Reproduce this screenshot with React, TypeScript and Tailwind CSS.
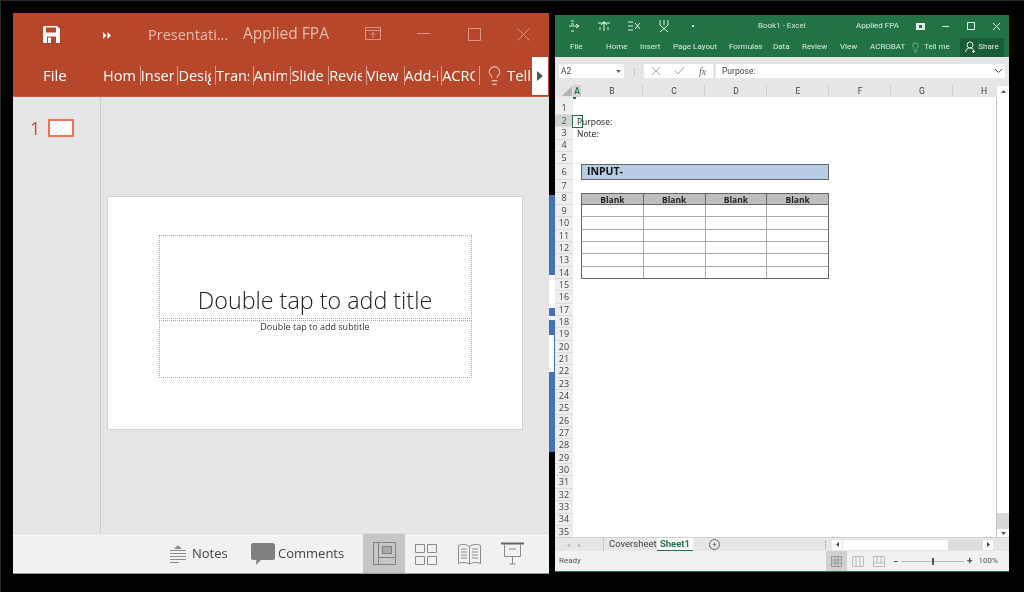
import { Lightbulb } from 'lucide-react';

const ui = { fontFamily: '"Open Sans", "Noto Sans", sans-serif' };
const xl = { fontFamily: 'Roboto, "Open Sans", sans-serif' };

const pptTabs = ['Home', 'Insert', 'Design', 'Transitions', 'Animations', 'Slide Show', 'Review', 'View', 'Add-ins', 'ACROBAT'];
const excelTabs = [
  { label: 'File', w: 'w-[36px]' },
  { label: 'Home', w: 'w-[34px]' },
  { label: 'Insert', w: 'w-[33px]' },
  { label: 'Page Layout', w: 'w-[56px]' },
  { label: 'Formulas', w: 'w-[44px]' },
  { label: 'Data', w: 'w-[29px]' },
  { label: 'Review', w: 'w-[38px]' },
  { label: 'View', w: 'w-[30px]' },
  { label: 'ACROBAT', w: 'w-[41px]' },
];
const columns = ['B', 'C', 'D', 'E', 'F', 'G', 'H'];
const rows = Array.from({ length: 35 }, (_, i) => i + 1);

const SaveIcon = () => (
  <svg width="17" height="17" viewBox="0 0 17 17">
    <path d="M0 1.5C0 .7.7 0 1.5 0H14l3 3v12.5c0 .8-.7 1.5-1.5 1.5h-14C.7 17 0 16.300 0 15.500z" fill="#fff" />
    <rect x="3" y="1.500" width="10" height="5" fill="#b7472a" />
    <rect x="4" y="10.500" width="9" height="6.500" fill="#b7472a" />
    <rect x="5" y="11.500" width="3" height="5.500" fill="#fff" />
  </svg>
);

const WindowControls = () => (
  <div className="flex items-center text-[#dc9682]">
    <svg width="16" height="14" viewBox="0 0 16 14" fill="none" stroke="currentColor" className="mr-[36px]">
      <path d="M.5.5h15v12H.5zM.5 3.500h15M8 11V5.500M5.500 8 8 5.500 10.500 8" />
    </svg>
    <svg width="13" height="2" viewBox="0 0 13 2" className="mr-[38px]">
      <rect width="13" height="1" fill="currentColor" />
    </svg>
    <svg width="13" height="13" viewBox="0 0 13 13" fill="none" stroke="currentColor" className="mr-[36px]">
      <path d="M.5.5h12v12H.5z" />
    </svg>
    <svg width="13" height="13" viewBox="0 0 13 13" fill="none" stroke="currentColor">
      <path d="m.5.5 12 12M12.500.5l-12 12" />
    </svg>
  </div>
);

const PptStatusBar = () => (
  <div className="flex h-[41px] items-center border-y border-t-[#dcdcdc] border-b-[#9a9a9a] bg-[#f1f1f1] text-[13px] text-[#444]">
    <svg width="18" height="20" viewBox="0 0 18 20" className="ml-[156px] text-[#8a8a8a]" fill="currentColor">
      <path d="M9 1 13 5H5zM1 6h16v1H1zM1 9h16v1H1zM1 12h16v1H1zM1 15h16v1H1zM1 18h9v1H1z" />
    </svg>
    <span className="ml-[5px] w-[59px]">Notes</span>
    <svg width="24" height="22" viewBox="0 0 24 22" className="text-[#808080]" fill="currentColor">
      <path d="M2 0h20c1 0 2 1 2 2v13c0 1-1 2-2 2H10l-5 5 .5-5H2c-1 0-2-1-2-2V2C0 1 1 0 2 0z" />
    </svg>
    <span className="ml-[3px] w-[85px]">Comments</span>
    <div className="flex h-full w-[42px] items-center justify-center bg-[#c6c6c6]">
      <svg width="23" height="23" viewBox="0 0 23 23" fill="none" stroke="#808080">
        <path d="M.5.5h22v22H.5zM5.500.5v22M5.500 15.500h17" />
        <rect x="9.500" y="4.500" width="9" height="7" fill="#aaa" />
      </svg>
    </div>
    <svg width="22" height="22" viewBox="0 0 22 22" fill="none" stroke="#8a8a8a" className="ml-[10px]">
      <path d="M.5 1.500h9v8h-9zM12.500 1.500h9v8h-9zM.5 13.500h9v8h-9zM12.500 13.500h9v8h-9z" />
    </svg>
    <svg width="23" height="22" viewBox="0 0 23 22" fill="none" stroke="#8a8a8a" className="ml-[21px]">
      <path d="M.5 2.500C4 1 8 1 11.500 3.500 15 1 19 1 22.500 2.500v18C19 19 15 19 11.500 21 8 19 4 19 .5 20.500zM11.500 3.500V21M3 6h6M3 9h6M3 12h6M3 15h6M14 6h6M14 9h6M14 12h6M14 15h6" />
    </svg>
    <svg width="23" height="23" viewBox="0 0 23 23" fill="none" stroke="#8a8a8a" className="ml-[20px]">
      <path d="M0 1.500h23" stroke="#666" strokeWidth="2" />
      <path d="M3.500 2.500v12h16v-12M8 7h7M11.500 14.500V22M8.500 22h6" />
    </svg>
  </div>
);

const PowerPoint = () => (
  <div className="flex h-[561px] w-[536px] shrink-0 flex-col bg-[#e6e6e6]" style={ui}>
    <div className="flex h-[42px] items-center bg-[#b7472a]">
      <div className="ml-[30px]"><SaveIcon /></div>
      <svg width="8" height="7" viewBox="0 0 8 7" fill="#fff" className="ml-[43px] mt-[2px]">
        <path d="M0 0 3.500 3.500 0 7zM4.500 0 8 3.500 4.500 7z" />
      </svg>
      <span className="ml-[37px] mt-[2px] w-[95px] text-[14.500px] text-[#e6bcae]">Presentati...</span>
      <span className="w-[122px] text-[15.500px] text-[#e6bcae]">Applied FPA</span>
      <WindowControls />
    </div>
    <div className="relative flex h-[42px] items-center border-b border-[#c55a3d] bg-[#b7472a] text-white">
      <span className="ml-[30px] w-[60px] text-[15px]">File</span>
      {pptTabs.map((t) => (
        <div key={t} className="flex h-[19px] w-[37.700px] shrink-0 border-r border-[#d99d8c] text-[14.500px] leading-[19px]">
          <span className="w-[33px] overflow-hidden whitespace-nowrap">{t}</span>
        </div>
      ))}
      <Lightbulb size={21} strokeWidth={1} className="ml-[4px]" />
      <span className="ml-[2px] text-[15px]">Tell</span>
      <div className="absolute right-[1px] top-[2px] flex h-[38px] w-[16px] items-center justify-center bg-white">
        <svg width="6" height="10" viewBox="0 0 6 10" fill="#555"><path d="M0 0 6 5 0 10z" /></svg>
      </div>
    </div>
    <div className="flex flex-1 bg-[#e6e6e6]">
      <div className="flex h-full w-[88px] shrink-0 items-start border-r border-[#cccccc] pl-[17px] pt-[22px]">
        <span className="text-[18px] leading-[18px] text-[#d24726]">1</span>
        <div className="ml-[8px] h-[18px] w-[26px] border-2 border-[#f0734f] bg-white" />
      </div>
      <div className="flex flex-1 items-start pl-[6px] pt-[99px]">
        <div className="flex h-[234px] w-[416px] flex-col items-center border border-[#d4d4d4] bg-white pt-[38px]">
          <div className="flex h-[84px] w-[313px] items-end justify-center border border-dotted border-[#aaa] pb-[2px]">
            <span className="text-[23.300px] font-light leading-[32px] text-[#222]">Double tap to add title</span>
          </div>
          <div className="mt-[1px] flex h-[58px] w-[313px] justify-center border border-dotted border-[#aaa]">
            <span className="text-[9px] font-medium leading-[11px] text-[#333]">Double tap to add subtitle</span>
          </div>
        </div>
      </div>
    </div>
    <PptStatusBar />
  </div>
);

const Strip = () => (
  <div className="flex h-[579px] w-[6px] shrink-0 flex-col">
    <div className="h-[182px] bg-black" />
    <div className="h-[80px] bg-[#4472b8]" />
    <div className="h-[33px] bg-white" />
    <div className="h-[8px] bg-[#4472b8]" />
    <div className="h-[4px] bg-white" />
    <div className="h-[14px] bg-[#4472b8]" />
    <div className="h-[39px] border-y border-r border-[#4472b8] bg-white" />
    <div className="h-[79px] bg-[#4472b8]" />
  </div>
);

const QuickIcon = ({ d }: { d: string }) => (
  <svg width="14" height="14" viewBox="0 0 14 14" fill="none" stroke="#dfeee6" strokeWidth="1" className="mr-[16px]">
    <path d={d} />
  </svg>
);

const ExcelTitle = () => (
  <div className="flex h-[22px] items-center bg-[#217346] text-[#cfe3d8]">
    <div className="ml-[12px] flex w-[172px] items-center">
      <QuickIcon d="M4 2h3M4 5h3M4 12h3M2 7h10M9 5l3 2-3 2" />
      <QuickIcon d="M1 4h12M7 2v10M4 6l3-3 3 3M3 8v3M11 8v3" />
      <QuickIcon d="M1 3h5M1 7h5M1 11h5M8 4l5 6M13 4l-5 6" />
      <QuickIcon d="M3 1v5M7 1v5M11 1v5M3 6l8 7M11 6l-8 7" />
      <div className="ml-[5px] h-[2px] w-[2px] bg-white" />
    </div>
    <span className="ml-[19px] w-[98px] text-[8px]">Book1 - Excel</span>
    <span className="w-[60px] text-[8px] text-[#e1eee7]">Applied FPA</span>
    <svg width="9" height="7" viewBox="0 0 9 7" fill="#e1eee7"><path d="M0 0h9v7H0zM3 2v3h3V2z" /></svg>
    <div className="ml-[17px] h-[1px] w-[7px] bg-[#e1eee7]" />
    <div className="ml-[18px] h-[8px] w-[8px] border border-[#e1eee7]" />
    <svg width="9" height="9" viewBox="0 0 9 9" stroke="#e1eee7" className="ml-[17px]"><path d="m1 1 7 7M8 1 1 8" /></svg>
  </div>
);

const ExcelRibbon = () => (
  <div className="flex h-[20px] items-center bg-[#217346] text-[8px] text-[#dcebe3]">
    <div className="flex w-[15px] shrink-0" />
    {excelTabs.map((t) => (
      <span key={t.label} className={`${t.w} shrink-0 whitespace-nowrap`}>{t.label}</span>
    ))}
    <Lightbulb size={11} strokeWidth={1} className="-ml-[1px]" />
    <span className="ml-[3px] w-[36px]">Tell me</span>
    <div className="flex h-[19px] w-[44px] items-center justify-center gap-[2px] bg-[#1a5c38]">
      <svg width="11" height="12" viewBox="0 0 11 12" fill="none" stroke="#e1eee7"><circle cx="5" cy="4" r="3" /><path d="M.5 11c.5-3 2-4 4.500-4 2 0 3 1 3.500 2M8.500 9v3M7 10.500h3" /></svg>
      <span>Share</span>
    </div>
  </div>
);

const FormulaBar = () => (
  <div className="flex h-[28px] items-center bg-[#e6e6e6] pl-[4px] text-[8.500px] text-[#444]">
    <div className="flex h-[14px] w-[65px] items-center justify-between bg-white pl-[2px] pr-[3px]">
      <span>A2</span>
      <svg width="5" height="3" viewBox="0 0 5 3" fill="#666"><path d="M0 0h5L2.500 3z" /></svg>
    </div>
    <div className="ml-[10px] h-[7px] w-[1px] border-l border-dotted border-[#aaa]" />
    <div className="ml-[9px] flex h-[14px] w-[69px] items-center bg-white pl-[8px] text-[#999]">
      <svg width="8" height="8" viewBox="0 0 8 8" stroke="#aaa"><path d="m0 0 8 8M8 0 0 8" /></svg>
      <svg width="9" height="8" viewBox="0 0 9 8" stroke="#aaa" fill="none" className="ml-[15px]"><path d="m0 4 3 3 6-7" /></svg>
      <span className="ml-[15px] text-[10px] italic text-[#666]" style={{ fontFamily: '"Liberation Serif", serif' }}>fx</span>
    </div>
    <div className="ml-[3px] flex h-[14px] w-[289px] items-center justify-between bg-white pl-[6px] pr-[3px]">
      <span>Purpose:</span>
      <svg width="7" height="4" viewBox="0 0 7 4" fill="none" stroke="#555"><path d="m0 0 3.500 3.500L7 0" /></svg>
    </div>
  </div>
);

const ColumnHeaders = () => (
  <div className="flex h-[12px] overflow-hidden bg-[#e6e6e6] text-[8.500px] leading-[13px] text-[#444]">
    <div className="flex w-[18px] shrink-0 items-end justify-end pb-[1px] pr-[1px]">
      <div className="h-0 w-0 border-b-[10px] border-l-[10px] border-b-[#b4b4b4] border-l-transparent" />
    </div>
    <div className="w-[8px] shrink-0 bg-[#d2d2d2] text-center font-semibold text-[#217346]">A</div>
    {columns.map((c) => (
      <div key={c} className="w-[62px] shrink-0 border-r border-[#d0d0d0] pl-[1px] text-center">{c}</div>
    ))}
  </div>
);

const rowHeight = (n: number) => (n === 6 ? 'h-[16px]' : 'h-[12.350px]');

const BlankTable = ({ row }: { row: number }) => {
  const head = row === 8;
  const last = row === 14;
  return (
    <div
      className={`ml-[8px] flex h-full w-[248px] border-x border-[#666] ${head ? 'border-y border-y-[#666] bg-[#bfbfbf]' : 'border-b'} ${last ? 'border-b-[#666]' : head ? '' : 'border-b-[#aaa]'}`}
    >
      {[0, 1, 2, 3].map((i) => (
        <div
          key={i}
          className={`flex-1 text-center text-[8.500px] font-bold leading-[11px] text-[#222] ${i < 3 ? (head ? 'border-r border-[#666]' : 'border-r border-[#aaa]') : ''}`}
        >
          {head ? 'Blank' : ''}
        </div>
      ))}
    </div>
  );
};

const SheetRow = ({ n }: { n: number }) => {
  const active = n === 2;
  return (
    <div className={`flex shrink-0 ${rowHeight(n)}`}>
      <div
        className={`flex h-full w-[18px] shrink-0 items-center justify-center border-b border-[#dcdcdc] text-[9px] ${active ? 'bg-[#d2d2d2] text-[#217346]' : 'bg-[#eeeeee] text-[#444]'}`}
      >
        {n}
      </div>
      {n === 2 && <span className="pl-[4px] text-[8.500px] leading-[13px] text-[#222]">Purpose:</span>}
      {n === 3 && <span className="pl-[4px] text-[8.500px] leading-[13px] text-[#222]">Note:</span>}
      {n === 6 && (
        <div className="ml-[8px] flex h-full w-[248px] items-center border border-[#666] bg-[#b8cce4] pl-[5px] text-[10.500px] font-bold text-[#111]">
          INPUT-
        </div>
      )}
      {n >= 8 && n <= 14 && <BlankTable row={n} />}
    </div>
  );
};

const Sheet = () => (
  <div className="flex h-[440px] bg-white">
    <div className="relative flex h-[440px] w-[442px] flex-col overflow-hidden border-r border-[#c0c0c0]">
      <div className="h-[5.500px] w-[18px] shrink-0 bg-[#eeeeee]" />
      {rows.map((n) => <SheetRow key={n} n={n} />)}
      <div className="absolute left-[17px] top-[18px] h-[13px] w-[11px] border border-[#217346]" />
      <div className="absolute left-[18px] top-0 h-[2px] w-[3px] bg-[#217346]" />
    </div>
    <div className="flex w-[12px] flex-col bg-[#e6e6e6]">
      <div className="-mt-[11px] flex h-[11px] items-center justify-center bg-white">
        <svg width="5" height="3" viewBox="0 0 5 3" fill="#555"><path d="M0 3h5L2.500 0z" /></svg>
      </div>
      <div className="h-[416px] bg-white" />
      <div className="flex-1 bg-[#d8d8d8]" />
      <div className="flex h-[8px] items-center justify-center bg-white">
        <svg width="5" height="3" viewBox="0 0 5 3" fill="#555"><path d="M0 0h5L2.500 3z" /></svg>
      </div>
    </div>
  </div>
);

const SheetTabs = () => (
  <div className="flex h-[14px] items-center border-t border-[#d0d0d0] bg-[#e6e6e6] text-[9.500px] text-[#444]">
    <div className="w-[48px] pl-[12px] text-[6px] tracking-[8px] text-[#aaa]">◂▸</div>
    <div className="flex h-full w-[54px] items-center border-l border-[#c8c8c8] pl-[5px]">Coversheet</div>
    <div className="flex h-full w-[36px] items-center justify-center border-b border-[#217346] bg-white font-bold text-[#217346]">Sheet1</div>
    <div className="ml-[16px] flex h-[11px] w-[11px] items-center justify-center rounded-full border border-[#666] text-[8px] leading-[8px]">+</div>
    <div className="ml-[105px] h-[8px] border-l border-dotted border-[#999]" />
    <div className="ml-[6px] flex h-[10px] w-[10px] items-center justify-center bg-white">
      <svg width="3" height="5" viewBox="0 0 3 5" fill="#444"><path d="M3 0v5L0 2.500z" /></svg>
    </div>
    <div className="ml-[1px] h-[10px] w-[105px] bg-white" />
    <div className="h-[10px] w-[35px] bg-[#dcdcdc]" />
    <div className="flex h-[10px] w-[10px] items-center justify-center bg-white">
      <svg width="3" height="5" viewBox="0 0 3 5" fill="#444"><path d="M0 0v5l3-2.500z" /></svg>
    </div>
  </div>
);

const ExcelStatus = () => (
  <div className="flex h-[20px] items-center bg-[#f1f1f1] text-[8px] text-[#555]">
    <span className="ml-[4px] w-[267px]">Ready</span>
    <div className="flex h-full w-[21px] items-center justify-center bg-[#d0d0d0]">
      <svg width="11" height="11" viewBox="0 0 11 11" fill="none" stroke="#999"><path d="M.5.5h10v10H.5zM4 .5v10M7 .5v10M.5 4h10M.5 7h10" /></svg>
    </div>
    <svg width="12" height="11" viewBox="0 0 12 11" fill="none" stroke="#bbb" className="ml-[5px]"><path d="M.5.5h11v10H.5zM4 .5v10M8 .5v10" /></svg>
    <svg width="12" height="11" viewBox="0 0 12 11" fill="none" stroke="#bbb" className="ml-[9px]"><path d="M.5.5h11v10H.5zM.5 7h11M4 .5V7M8 .5V7" /></svg>
    <div className="ml-[9px] h-[1px] w-[4px] bg-[#555]" />
    <div className="relative ml-[3px] h-[1px] w-[63px] bg-[#bbb]">
      <div className="absolute -top-[3px] left-[31px] h-[7px] w-[2px] bg-[#555]" />
    </div>
    <span className="ml-[3px] text-[10px] font-bold leading-[10px] text-[#555]">+</span>
    <span className="ml-[6px]">100%</span>
  </div>
);

const Excel = () => (
  <div className="mt-[2px] flex h-[557px] w-[454px] shrink-0 flex-col border-b border-[#217346] bg-[#e6e6e6]" style={xl}>
    <ExcelTitle />
    <ExcelRibbon />
    <FormulaBar />
    <ColumnHeaders />
    <div style={ui}><Sheet /></div>
    <SheetTabs />
    <ExcelStatus />
  </div>
);

export default function App() {
  return (
    <div className="flex h-[592px] w-[1024px] items-start overflow-hidden border-l border-t border-[#2a2a2a] bg-black pl-[12px] pt-[12px] blur-[0.5px]">
      <PowerPoint />
      <Strip />
      <Excel />
    </div>
  );
}
